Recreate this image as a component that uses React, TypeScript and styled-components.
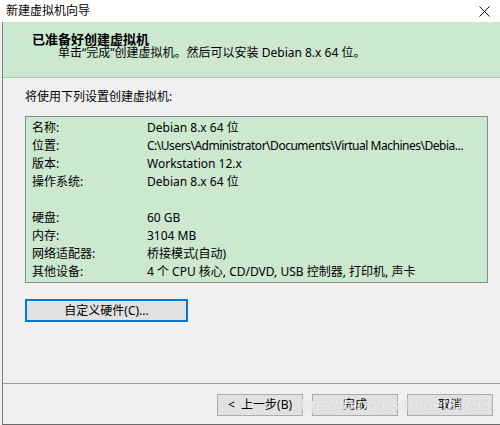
import React from 'react';
import styled, { createGlobalStyle } from 'styled-components';

const GlobalStyle = createGlobalStyle`
  html, body {
    margin: 0;
    padding: 0;
    background: #f0f0f0;
  }
  body {
    font-family: "Noto Sans", "Noto Sans CJK SC", sans-serif;
    font-size: 12px;
    color: #000;
  }
`;

type Row = { label: string; value: string; tight?: boolean };

const rows: (Row | null)[] = [
  { label: '名称:', value: 'Debian 8.x 64 位' },
  {
    label: '位置:',
    value: 'C:\\Users\\Administrator\\Documents\\Virtual Machines\\Debia...',
    tight: true,
  },
  { label: '版本:', value: 'Workstation 12.x' },
  { label: '操作系统:', value: 'Debian 8.x 64 位' },
  null,
  { label: '硬盘:', value: '60 GB' },
  { label: '内存:', value: '3104 MB' },
  { label: '网络适配器:', value: '桥接模式(自动)' },
  { label: '其他设备:', value: '4 个 CPU 核心, CD/DVD, USB 控制器, 打印机, 声卡' },
];

const Window = styled.div`
  position: relative;
  width: 500px;
  height: 425px;
  display: flex;
  flex-direction: column;
  overflow: hidden;
  background: #f0f0f0;
`;

const TitleBar = styled.div`
  height: 22px;
  flex: none;
  background: #fff;
  display: flex;
  align-items: center;
  justify-content: space-between;
  padding: 0 10px 0 6px;
  line-height: 20px;
`;

const Client = styled.div`
  flex: 1;
  margin-left: 2px;
  border-left: 1px solid #7c7c7c;
  border-bottom: 1px solid #6a6a6a;
  display: flex;
  flex-direction: column;
  min-height: 0;
`;

const Header = styled.div`
  flex: none;
  height: 56px;
  box-sizing: border-box;
  background: #cce8cf;
  border-bottom: 1px solid #b4c4b6;
  padding-top: 10px;
`;

const HeaderTitle = styled.div`
  font-weight: bold;
  font-size: 13px;
  line-height: 14px;
  padding-left: 29px;
`;

const HeaderSub = styled.div`
  line-height: 14px;
  padding-left: 55px;
`;

const Body = styled.div`
  flex: 1;
  padding: 10px 12px 0 22px;
  display: flex;
  flex-direction: column;
  align-items: flex-start;
`;

const Intro = styled.div`
  line-height: 18px;
`;

const Summary = styled.div`
  margin-top: 10px;
  align-self: stretch;
  background: #cce8cf;
  border: 1px solid #888f89;
  padding: 2px 0 1px 6px;
`;

const SummaryRow = styled.div`
  display: grid;
  grid-template-columns: 115px 1fr;
  height: 18px;
  line-height: 18px;
  white-space: nowrap;
  overflow: hidden;
`;

const Value = styled.span<{ $tight?: boolean }>`
  letter-spacing: ${({ $tight }) => ($tight ? '-0.48px' : 'normal')};
`;

const Button = styled.button<{ $focused?: boolean; $width: number }>`
  width: ${({ $width }) => $width}px;
  height: ${({ $focused }) => ($focused ? 23 : 22)}px;
  box-sizing: border-box;
  background: #e1e1e1;
  border: 1px solid ${({ $focused }) => ($focused ? '#0078d7' : '#adadad')};
  box-shadow: ${({ $focused }) => ($focused ? 'inset 0 0 0 1px #0078d7' : 'none')};
  font: inherit;
  color: #000;
  padding: 0;
  line-height: 18px;
  white-space: pre;
`;

const CustomButton = styled(Button)`
  margin-top: 16px;
`;

const Footer = styled.div`
  flex: none;
  height: 41px;
  border-top: 1px solid #a0a0a0;
  box-sizing: border-box;
  display: flex;
  justify-content: flex-end;
  align-items: flex-start;
  gap: 9px;
  padding: 10px 7px 0 0;
`;

const Watermark = styled.div`
  position: absolute;
  left: 291px;
  top: 394px;
  font-family: "Liberation Sans", Arial, sans-serif;
  font-size: 17px;
  line-height: 22px;
  color: rgba(255, 255, 255, 0.72);
  text-shadow: 0 0 1px rgba(120, 120, 120, 0.35);
  letter-spacing: 0.2px;
  pointer-events: none;
  white-space: nowrap;
`;

const CloseIcon = () => (
  <svg width="11" height="11" viewBox="0 0 11 11">
    <path d="M0.5 0.5 L10.5 10.5 M10.5 0.5 L0.5 10.5" stroke="#111" strokeWidth="1" fill="none" />
  </svg>
);

export default function App() {
  return (
    <Window>
      <GlobalStyle />
      <TitleBar>
        <span>新建虚拟机向导</span>
        <CloseIcon />
      </TitleBar>
      <Client>
        <Header>
          <HeaderTitle>已准备好创建虚拟机</HeaderTitle>
          <HeaderSub>单击“完成”创建虚拟机。然后可以安装 Debian 8.x 64 位。</HeaderSub>
        </Header>
        <Body>
          <Intro>将使用下列设置创建虚拟机:</Intro>
          <Summary>
            {rows.map((r, i) => (
              <SummaryRow key={i}>
                <span>{r ? r.label : ''}</span>
                <Value $tight={r?.tight}>{r ? r.value : ''}</Value>
              </SummaryRow>
            ))}
          </Summary>
          <CustomButton $focused $width={163}>自定义硬件(C)...</CustomButton>
        </Body>
        <Footer>
          <Button $width={86}>{'<  上一步(B)'}</Button>
          <Button $width={86}>完成</Button>
          <Button $width={86}>取消</Button>
        </Footer>
      </Client>
      <Watermark>https://blog.csdn.net/u793</Watermark>
    </Window>
  );
}
